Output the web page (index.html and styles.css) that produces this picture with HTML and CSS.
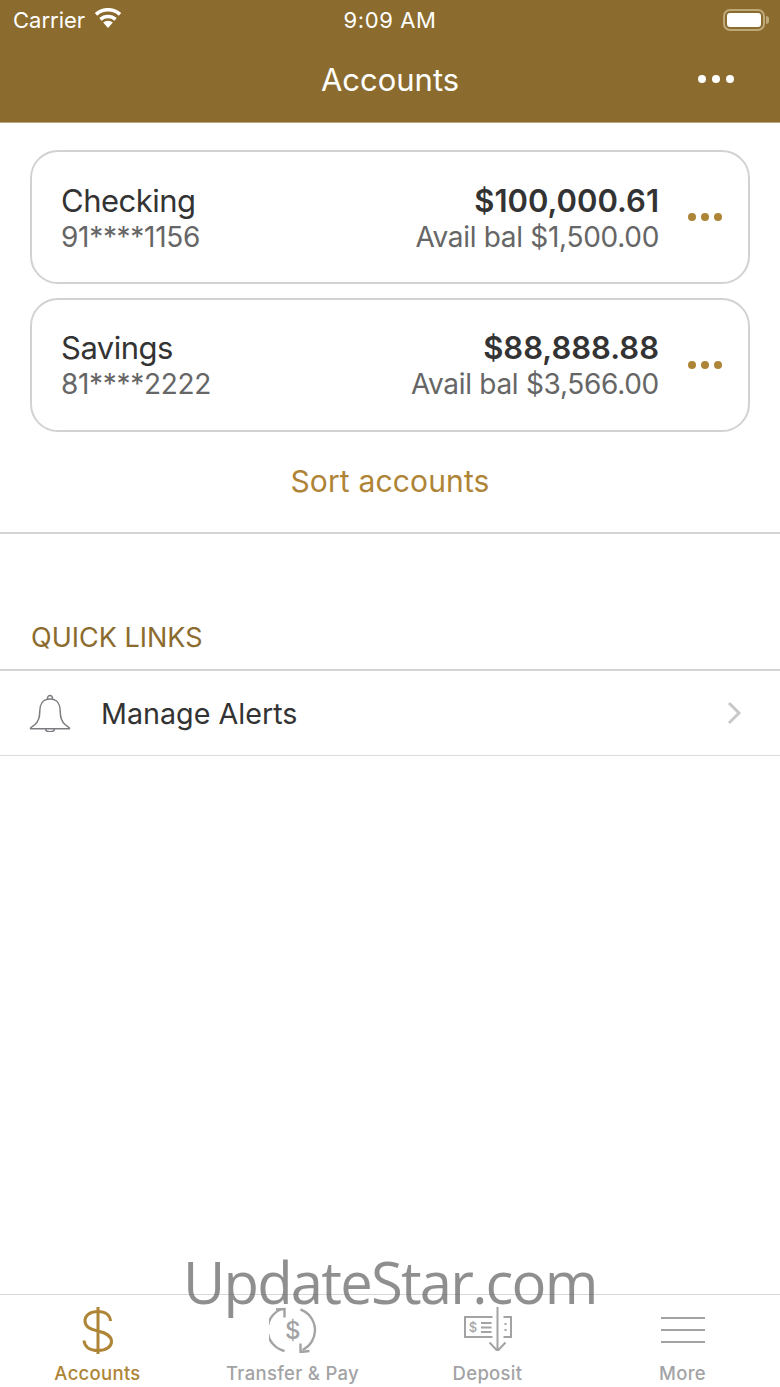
FILE: index.html
```html
<!DOCTYPE html>
<html lang="en">

<head>
    <meta charset="UTF-8">
    <meta name="viewport" content="width=device-width, initial-scale=1.0">
    <title>Accounts</title>
    <link rel="stylesheet" href="styles.css">
</head>

<body>
    <div class="app">
        <header class="header">
            <div class="status">
                <div class="status-left">
                    <span>Carrier</span>
                    <svg class="wifi" viewBox="0 0 28 20" width="28" height="20">
                        <path d="M14 20l-4.800-5.400a7 7 0 0 1 9.600 0z" fill="#fff"/>
                        <path d="M6.400 11.400a11.200 11.200 0 0 1 15.200 0" fill="none" stroke="#fff" stroke-width="3.600"/>
                        <path d="M2 6.400a17.800 17.800 0 0 1 24 0" fill="none" stroke="#fff" stroke-width="3.600"/>
                    </svg>
                </div>
                <div class="status-time">9:09 AM</div>
                <div class="status-right">
                    <div class="battery"><div class="battery-fill"></div></div>
                    <div class="battery-cap"></div>
                </div>
            </div>
            <div class="nav">
                <div class="nav-side"></div>
                <h1 class="nav-title">Accounts</h1>
                <div class="nav-side nav-more">
                    <div class="dots dots-white"><i></i><i></i><i></i></div>
                </div>
            </div>
        </header>

        <main class="main">
            <section class="accounts">
                <div class="card">
                    <div class="card-left">
                        <div class="card-name">Checking</div>
                        <div class="card-sub">91****1156</div>
                    </div>
                    <div class="card-right">
                        <div class="card-amount">$100,000.61</div>
                        <div class="card-sub">Avail bal $1,500.00</div>
                    </div>
                    <div class="dots dots-gold"><i></i><i></i><i></i></div>
                </div>
                <div class="card">
                    <div class="card-left">
                        <div class="card-name">Savings</div>
                        <div class="card-sub">81****2222</div>
                    </div>
                    <div class="card-right">
                        <div class="card-amount">$88,888.88</div>
                        <div class="card-sub">Avail bal $3,566.00</div>
                    </div>
                    <div class="dots dots-gold"><i></i><i></i><i></i></div>
                </div>
                <div class="sort">Sort accounts</div>
            </section>

            <h2 class="section-title">QUICK LINKS</h2>
            <div class="link-row">
                <svg class="bell" viewBox="0 0 42 38" width="42" height="38">
                    <path d="M18.500 5.500c-.6-5.500 5.600-5.500 5 0M21 5C13.500 5 10.800 11 10.800 17c0 7-1.300 10.500-4.800 13.500-2 1.700-4 2.500-4.500 3.500v.8h39V34c-.5-1-2.500-1.800-4.500-3.500-3.500-3-4.800-6.500-4.800-13.500 0-6-2.700-12-10.200-12zM16.500 34.800c0 1.800 2 3 4.500 3s4.500-1.200 4.500-3" fill="none" stroke="#7c7c80" stroke-width="1.500" stroke-linejoin="round"/>
                </svg>
                <span class="link-label">Manage Alerts</span>
                <svg class="chevron" viewBox="0 0 16 24" width="16" height="24">
                    <path d="M3 2l10 10L3 22" fill="none" stroke="#c8c8cb" stroke-width="3"/>
                </svg>
            </div>
        </main>

        <nav class="tabs">
            <div class="tab tab-active">
                <div class="tab-icon">
                    <svg viewBox="0 0 34 48" width="34" height="48">
                        <path d="M29.500 14C29 8 24 4.500 17 4.500 9.500 4.500 4 8 4 14c0 6 5 8 13 10 8 2 13.500 4.500 13.500 10.500 0 5.500-5.500 9-13.500 9-8 0-13.500-3.500-14-10M17 0v47" fill="none" stroke="#ae8436" stroke-width="3"/>
                    </svg>
                </div>
                <span>Accounts</span>
            </div>
            <div class="tab">
                <div class="tab-icon">
                    <svg viewBox="0 0 48 46" width="48" height="46">
                        <path d="M15.500 44A22 22 0 0 1 11.500 2.500M31.500 2.500A22 22 0 0 1 33.500 43" fill="none" stroke="#a3a3a5" stroke-width="2.400"/>
                        <path d="M7 2.500L15.500 2v8.500M40.500 44l-9 1v-8.500" fill="none" stroke="#a3a3a5" stroke-width="2.400"/>
                        <text x="24" y="32" class="tab-dollar">$</text>
                    </svg>
                </div>
                <span>Transfer &amp; Pay</span>
            </div>
            <div class="tab">
                <div class="tab-icon">
                    <svg viewBox="0 0 48 44" width="48" height="44">
                        <path d="M28.500 30H1V10h27.500M39.500 10H47v20h-7.500M33.500 0v44M25.500 35.500l8 8.500 8-8.500" fill="none" stroke="#a3a3a5" stroke-width="2"/>
                        <path d="M17 16h10.500M17 20.500h10.500M17 25h10.500M40.500 17h2M40.500 23h2" fill="none" stroke="#a3a3a5" stroke-width="2"/>
                        <text x="9" y="25" class="tab-dollar-small">$</text>
                    </svg>
                </div>
                <span>Deposit</span>
            </div>
            <div class="tab">
                <div class="tab-icon">
                    <div class="burger"><i></i><i></i><i></i></div>
                </div>
                <span>More</span>
            </div>
        </nav>

        <div class="watermark">UpdateStar.com</div>
    </div>
</body>

</html>
```

FILE: styles.css
```css
* {
    box-sizing: border-box;
}

html, body {
    margin: 0;
    padding: 0;
}

body {
    background-color: #fff;
    font-family: Inter, Roboto, 'Liberation Sans', sans-serif;
    color: #333;
}

.app {
    position: relative;
    width: 780px;
    height: 1387px;
    display: flex;
    flex-direction: column;
    overflow: hidden;
}

/* header */
.header {
    background-color: #8b6c2e;
    color: #fff;
    height: 123px;
    flex: none;
    border-bottom: 1px solid #b8a883;
}

.status {
    height: 40px;
    display: grid;
    grid-template-columns: 1fr auto 1fr;
    align-items: center;
    padding: 0 13px;
    font-size: 22px;
}

.status-left {
    display: flex;
    align-items: center;
    gap: 9px;
}

.status-time {
    letter-spacing: 0.6px;
}

.wifi {
    margin-top: -4px;
}

.status-right {
    display: flex;
    justify-content: flex-end;
    align-items: center;
    margin-right: -2px;
}

.battery {
    width: 42px;
    height: 22px;
    border: 2px solid #bda879;
    border-radius: 7px;
    padding: 2px;
}

.battery-fill {
    height: 100%;
    background-color: #fff;
    border-radius: 3px;
}

.battery-cap {
    width: 3px;
    height: 8px;
    margin-left: 1px;
    background-color: #bda879;
    border-radius: 0 3px 3px 0;
}

.nav {
    height: 82px;
    display: flex;
    align-items: center;
    justify-content: space-between;
    padding: 0 46px;
    margin-top: -2px;
}

.nav-side {
    width: 36px;
}

.nav-title {
    margin: 0;
    font-size: 31px;
    font-weight: 400;
}

.nav-more {
    display: flex;
    justify-content: flex-end;
}

.dots {
    display: flex;
    gap: 5px;
}

.dots-white {
    gap: 6px;
    margin-top: -1px;
}

.dots i {
    display: block;
    flex: none;
    width: 8px;
    height: 8px;
    border-radius: 50%;
}

.dots-white i {
    background-color: #fff;
}

.dots-gold {
    flex: none;
    margin-left: 29px;
}

.dots-gold i {
    background-color: #ae8436;
}

/* accounts */
.main {
    flex: 1;
}

.accounts {
    padding: 27px 30px 0;
    display: flex;
    flex-direction: column;
    gap: 14px;
    height: 411px;
    border-bottom: 2px solid #d4d4d6;
}

.card {
    height: 134px;
    border: 2px solid #d2d2d4;
    border-radius: 28px;
    padding: 0 26px 0 29px;
    display: flex;
    align-items: center;
    justify-content: space-between;
}

.card-left {
    flex: 1;
    margin-top: 4px;
}

.card-right {
    text-align: right;
    margin-top: 4px;
}

.card + .card .card-left,
.card + .card .card-right {
    margin-top: 2px;
}

.card-name {
    font-size: 31px;
    line-height: 36px;
    letter-spacing: -0.5px;
    color: #333;
}

.card-amount {
    font-size: 31px;
    line-height: 36px;
    font-weight: 600;
    color: #333;
}

.card-sub {
    font-size: 28px;
    line-height: 36px;
    letter-spacing: -0.3px;
    color: #666;
}

.sort {
    text-align: center;
    font-size: 30px;
    line-height: 36px;
    letter-spacing: 0.15px;
    color: #ae8436;
    margin-top: 17px;
}

/* quick links */
.section-title {
    margin: 0;
    height: 137px;
    padding: 88px 0 0 31px;
    font-size: 27px;
    line-height: 32px;
    font-weight: 400;
    color: #8b6c2e;
    border-bottom: 2px solid #d4d4d6;
}

.link-row {
    height: 85px;
    display: flex;
    align-items: center;
    padding: 0 38px 0 29px;
    border-bottom: 1px solid #dcdcde;
}

.bell {
    flex: none;
}

.link-label {
    flex: 1;
    margin-left: 30px;
    font-size: 28.7px;
    color: #333;
}

/* tab bar */
.tabs {
    height: 93px;
    flex: none;
    display: grid;
    grid-template-columns: repeat(4, 1fr);
    border-top: 1px solid #d8d8da;
    background-color: #fff;
}

.tab {
    display: flex;
    flex-direction: column;
    align-items: center;
    color: #a3a3a5;
    font-size: 18.5px;
    font-weight: 500;
    letter-spacing: 0.3px;
}

.tab-active {
    color: #ae8436;
}

.tab-icon {
    height: 67px;
    padding-top: 12px;
    display: flex;
    justify-content: center;
}

.tab-dollar {
    font-size: 24px;
    fill: #a3a3a5;
    text-anchor: middle;
}

.tab-dollar-small {
    font-size: 13px;
    fill: #a3a3a5;
    text-anchor: middle;
}

.burger {
    width: 44px;
    display: flex;
    flex-direction: column;
    gap: 10px;
    margin-top: 10px;
}

.burger i {
    display: block;
    height: 2px;
    background-color: #a3a3a5;
}

/* watermark sits over the tab bar edge */
.watermark {
    position: absolute;
    left: 183px;
    top: 1242px;
    font-family: 'Open Sans', 'Noto Sans', sans-serif;
    font-size: 58px;
    line-height: 80px;
    letter-spacing: -1.8px;
    color: rgba(90, 90, 90, 0.68);
    white-space: nowrap;
}
```
